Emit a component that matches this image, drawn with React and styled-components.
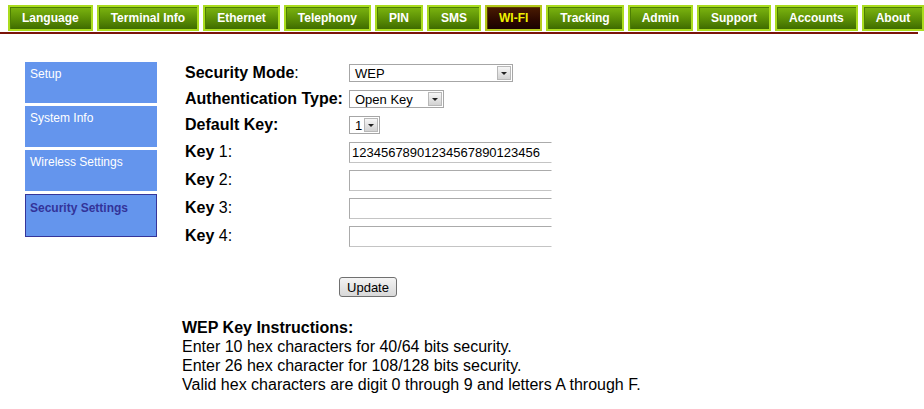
import React from "react";
import styled, { createGlobalStyle } from "styled-components";

const Global = createGlobalStyle`
  html, body { margin: 0; padding: 0; background: #fff; }
  body { font-family: "Liberation Sans", Arial, sans-serif; color: #000; }
`;

const Header = styled.div`
  width: 918px;
  padding: 5px 0 1px 8px;
  box-sizing: border-box;
  border-bottom: 2px solid #7a1408;
`;

const Tabs = styled.div`
  display: flex;
  gap: 4px;
`;

const Tab = styled.div`
  height: 26px;
  box-sizing: border-box;
  padding: 0 12px;
  display: flex;
  align-items: center;
  font-size: 12px;
  font-weight: bold;
  white-space: nowrap;
  border: 2px solid ${(p) => (p.$active ? "#b4c81a" : "#aadc1e")};
  box-shadow: inset 1px 1px 0 ${(p) => (p.$active ? "#5a3a00" : "#4d7e04")};
  color: ${(p) => (p.$active ? "#eef200" : "#fff")};
  background: ${(p) =>
    p.$active
      ? "linear-gradient(to bottom, #4a1c02 0%, #2c0800 60%, #1a0200 100%)"
      : "linear-gradient(to bottom, #7cb510 0%, #5e9206 50%, #3f6c00 100%)"};
`;

const Main = styled.div`
  display: flex;
  gap: 25px;
  padding: 26px 0 0 25px;
`;

const Sidebar = styled.div`
  width: 132px;
  margin-top: 2px;
  display: flex;
  flex-direction: column;
  gap: 3px;
`;

const SideItem = styled.div`
  height: ${(p) => (p.$active ? 43 : 41)}px;
  box-sizing: border-box;
  background: #6495ed;
  border: 1px solid ${(p) => (p.$active ? "#35359a" : "#6495ed")};
  padding: ${(p) => (p.$active ? 6 : 4)}px 4px 4px;
  font-size: 12px;
  line-height: 14px;
  color: ${(p) => (p.$active ? "#333399" : "#fff")};
  font-weight: ${(p) => (p.$active ? "bold" : "normal")};
`;

const Content = styled.div`
  display: flex;
  flex-direction: column;
`;

const Form = styled.div`
  display: flex;
  flex-direction: column;
  width: 372px;
`;

const Row = styled.div`
  display: flex;
  align-items: center;
  height: ${(p) => p.$h}px;
`;

const Label = styled.div`
  width: 164px;
  padding-left: 3px;
  font-size: 16px;
  font-weight: bold;
  white-space: nowrap;
`;

const Plain = styled.span`
  font-weight: normal;
`;

const SelectBox = styled.span`
  display: inline-flex;
  align-items: center;
  justify-content: space-between;
  width: ${(p) => p.$w}px;
  height: 18px;
  box-sizing: border-box;
  border: 1px solid #a6a6a6;
  background: #fff;
  font-size: 13px;
  padding-left: 5px;
`;

const SelectArrow = styled.span`
  width: 14px;
  height: 14px;
  margin-right: 1px;
  box-sizing: border-box;
  border: 1px solid #b8b8b8;
  background: linear-gradient(to bottom, #f6f6f6, #d2d2d2);
  display: flex;
  align-items: center;
  justify-content: center;
  &::after {
    content: "";
    border-left: 3px solid transparent;
    border-right: 3px solid transparent;
    border-top: 3px solid #222;
    margin-top: 1px;
  }
`;

const KeyInput = styled.input`
  width: 203px;
  height: 21px;
  box-sizing: border-box;
  border: 1px solid #ababab;
  border-right-color: #fff;
  border-bottom-color: #c4c4c4;
  padding: 0 2px;
  margin: 0;
  font-family: "Liberation Sans", Arial, sans-serif;
  font-size: 13px;
  color: #000;
  outline: none;
`;

const ButtonRow = styled.div`
  display: flex;
  justify-content: center;
  margin-top: 27px;
`;

const Button = styled.button`
  height: 20px;
  padding: 0 7px;
  font-family: "Liberation Sans", Arial, sans-serif;
  font-size: 13px;
  color: #000;
  border: 1px solid #707070;
  border-radius: 3px;
  background: linear-gradient(to bottom, #f4f4f4 0%, #e6e6e6 50%, #d8d8d8 100%);
`;

const Instructions = styled.div`
  margin-top: 21px;
  font-size: 16px;
  line-height: 19px;
`;

const InstrTitle = styled.div`
  font-weight: bold;
`;

const tabs = [
  "Language",
  "Terminal Info",
  "Ethernet",
  "Telephony",
  "PIN",
  "SMS",
  "WI-FI",
  "Tracking",
  "Admin",
  "Support",
  "Accounts",
  "About",
];

const side = ["Setup", "System Info", "Wireless Settings", "Security Settings"];

function Select({ w, value }) {
  return (
    <SelectBox $w={w}>
      <span>{value}</span>
      <SelectArrow />
    </SelectBox>
  );
}

export default function App() {
  return (
    <>
      <Global />
      <Header>
        <Tabs>
          {tabs.map((t) => (
            <Tab key={t} $active={t === "WI-FI"}>
              {t}
            </Tab>
          ))}
        </Tabs>
      </Header>
      <Main>
        <Sidebar>
          {side.map((s) => (
            <SideItem key={s} $active={s === "Security Settings"}>
              {s}
            </SideItem>
          ))}
        </Sidebar>
        <Content>
          <Form>
            <Row $h={26}>
              <Label>
                Security Mode<Plain>:</Plain>
              </Label>
              <Select w={164} value="WEP" />
            </Row>
            <Row $h={26}>
              <Label>Authentication Type:</Label>
              <Select w={95} value="Open Key" />
            </Row>
            <Row $h={26}>
              <Label>Default Key:</Label>
              <Select w={31} value="1" />
            </Row>
            <Row $h={28}>
              <Label>
                Key<Plain> 1:</Plain>
              </Label>
              <KeyInput defaultValue="12345678901234567890123456" />
            </Row>
            <Row $h={28}>
              <Label>
                Key<Plain> 2:</Plain>
              </Label>
              <KeyInput />
            </Row>
            <Row $h={28}>
              <Label>
                Key<Plain> 3:</Plain>
              </Label>
              <KeyInput />
            </Row>
            <Row $h={28}>
              <Label>
                Key<Plain> 4:</Plain>
              </Label>
              <KeyInput />
            </Row>
            <ButtonRow>
              <Button>Update</Button>
            </ButtonRow>
          </Form>
          <Instructions>
            <InstrTitle>WEP Key Instructions:</InstrTitle>
            <div>Enter 10 hex characters for 40/64 bits security.</div>
            <div>Enter 26 hex character for 108/128 bits security.</div>
            <div>Valid hex characters are digit 0 through 9 and letters A through F.</div>
          </Instructions>
        </Content>
      </Main>
    </>
  );
}
